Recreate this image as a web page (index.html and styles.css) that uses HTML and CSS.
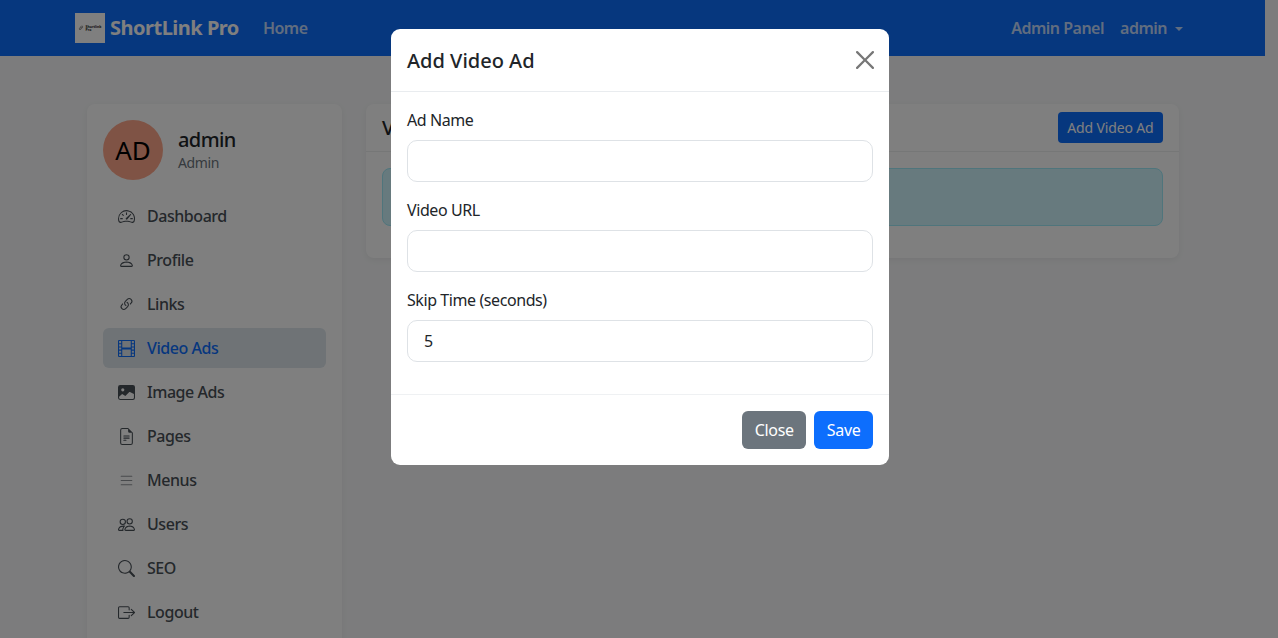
FILE: index.html
```html
<!DOCTYPE html>
<html lang="en">
<head>
    <meta charset="UTF-8">
    <meta name="viewport" content="width=device-width, initial-scale=1.0">
    <title>Video Ads - ShortLink Pro</title>
    <link rel="stylesheet" href="styles.css">
</head>
<body>

<!-- Top navigation -->
<nav class="navbar">
    <a class="brand" href="#">
        <span class="brand-logo">
            <svg class="brand-logo-icon" viewBox="0 0 16 16"><path d="M4.715 6.542 3.343 7.914a3 3 0 1 0 4.243 4.243l1.828-1.829A3 3 0 0 0 8.586 5.5L8 6.086a1 1 0 0 0-.154.199 2 2 0 0 1 .861 3.337L6.88 11.45a2 2 0 1 1-2.83-2.83l.793-.792a4 4 0 0 1-.128-1.287z"/><path d="M6.586 4.672A3 3 0 0 0 7.414 9.5l.775-.776a2 2 0 0 1-.896-3.346L9.12 3.55a2 2 0 1 1 2.83 2.83l-.793.792c.112.42.155.855.128 1.287l1.372-1.372a3 3 0 1 0-4.243-4.243z"/></svg>
            <span class="brand-logo-text">Shortlink<br>Pro</span>
        </span>
        ShortLink Pro
    </a>
    <a class="nav-link nav-home" href="#">Home</a>
    <div class="nav-right">
        <a class="nav-link" href="#">Admin Panel</a>
        <a class="nav-link nav-user" href="#">admin<span class="caret"></span></a>
    </div>
</nav>

<div class="layout">
    <!-- Sidebar -->
    <aside class="sidebar">
        <div class="user-box">
            <div class="avatar">AD</div>
            <div class="user-info">
                <div class="user-name">admin</div>
                <div class="user-role">Admin</div>
            </div>
        </div>
        <ul class="side-menu">
            <li><a href="#">
                <svg class="icon" viewBox="0 0 16 16"><path d="M8 4a.5.5 0 0 1 .5.5V6a.5.5 0 0 1-1 0V4.5A.5.5 0 0 1 8 4M3.732 5.732a.5.5 0 0 1 .707 0l.915.914a.5.5 0 1 1-.708.708l-.914-.915a.5.5 0 0 1 0-.707M2 10a.5.5 0 0 1 .5-.5h1.586a.5.5 0 0 1 0 1H2.5A.5.5 0 0 1 2 10m9.5 0a.5.5 0 0 1 .5-.5h1.5a.5.5 0 0 1 0 1H12a.5.5 0 0 1-.5-.5m.754-4.246a.39.39 0 0 0-.527-.02L7.547 9.31a.91.91 0 1 0 1.302 1.258l3.434-4.297a.39.39 0 0 0-.029-.518z"/><path fill-rule="evenodd" d="M0 10a8 8 0 1 1 15.547 2.661c-.442 1.253-1.845 1.602-2.932 1.25C11.309 13.488 9.475 13 8 13c-1.474 0-3.31.488-4.615.911-1.087.352-2.49.003-2.932-1.25A8 8 0 0 1 0 10m8-7a7 7 0 0 0-6.603 9.329c.203.575.923.876 1.68.63C4.397 12.533 6.358 12 8 12s3.604.532 4.923.96c.757.245 1.477-.056 1.68-.631A7 7 0 0 0 8 3"/></svg>
                Dashboard</a></li>
            <li><a href="#">
                <svg class="icon" viewBox="0 0 16 16"><path d="M8 8a3 3 0 1 0 0-6 3 3 0 0 0 0 6m2-3a2 2 0 1 1-4 0 2 2 0 0 1 4 0m4 8c0 1-1 1-1 1H3s-1 0-1-1 1-4 6-4 6 3 6 4m-1-.004c-.001-.246-.154-.986-.832-1.664C11.516 10.68 10.289 10 8 10s-3.516.68-4.168 1.332c-.678.678-.83 1.418-.832 1.664z"/></svg>
                Profile</a></li>
            <li><a href="#">
                <svg class="icon" viewBox="0 0 16 16"><path d="M4.715 6.542 3.343 7.914a3 3 0 1 0 4.243 4.243l1.828-1.829A3 3 0 0 0 8.586 5.5L8 6.086a1 1 0 0 0-.154.199 2 2 0 0 1 .861 3.337L6.88 11.45a2 2 0 1 1-2.83-2.83l.793-.792a4 4 0 0 1-.128-1.287z"/><path d="M6.586 4.672A3 3 0 0 0 7.414 9.5l.775-.776a2 2 0 0 1-.896-3.346L9.12 3.55a2 2 0 1 1 2.83 2.83l-.793.792c.112.42.155.855.128 1.287l1.372-1.372a3 3 0 1 0-4.243-4.243z"/></svg>
                Links</a></li>
            <li class="active"><a href="#">
                <svg class="icon" viewBox="0 0 16 16"><path d="M0 1a1 1 0 0 1 1-1h14a1 1 0 0 1 1 1v14a1 1 0 0 1-1 1H1a1 1 0 0 1-1-1zm4 0v6h8V1zm8 8H4v6h8zM1 1v2h2V1zm2 3H1v2h2zM1 7v2h2V7zm2 3H1v2h2zm-2 3v2h2v-2zM15 1h-2v2h2zm-2 3v2h2V4zm2 3h-2v2h2zm-2 3v2h2v-2zm2 3h-2v2h2z"/></svg>
                Video Ads</a></li>
            <li><a href="#">
                <svg class="icon" viewBox="0 0 16 16"><path d="M.002 3a2 2 0 0 1 2-2h12a2 2 0 0 1 2 2v10a2 2 0 0 1-2 2h-12a2 2 0 0 1-2-2zm1 9v1a1 1 0 0 0 1 1h12a1 1 0 0 0 1-1V9.5l-3.777-1.947a.5.5 0 0 0-.577.093l-3.71 3.71-2.66-1.772a.5.5 0 0 0-.63.062zm5-6.5a1.5 1.5 0 1 0-3 0 1.5 1.5 0 0 0 3 0"/></svg>
                Image Ads</a></li>
            <li><a href="#">
                <svg class="icon" viewBox="0 0 16 16"><path d="M5.5 7a.5.5 0 0 0 0 1h5a.5.5 0 0 0 0-1zM5 9.5a.5.5 0 0 1 .5-.5h5a.5.5 0 0 1 0 1h-5a.5.5 0 0 1-.5-.5m0 2a.5.5 0 0 1 .5-.5h2a.5.5 0 0 1 0 1h-2a.5.5 0 0 1-.5-.5"/><path d="M9.5 0H4a2 2 0 0 0-2 2v12a2 2 0 0 0 2 2h8a2 2 0 0 0 2-2V4.5zm0 1v2A1.5 1.5 0 0 0 11 4.5h2V14a1 1 0 0 1-1 1H4a1 1 0 0 1-1-1V2a1 1 0 0 1 1-1z"/></svg>
                Pages</a></li>
            <li><a href="#">
                <svg class="icon icon-light" viewBox="0 0 16 16"><path fill-rule="evenodd" d="M2.5 12a.5.5 0 0 1 .5-.5h10a.5.5 0 0 1 0 1H3a.5.5 0 0 1-.5-.5m0-4a.5.5 0 0 1 .5-.5h10a.5.5 0 0 1 0 1H3a.5.5 0 0 1-.5-.5m0-4a.5.5 0 0 1 .5-.5h10a.5.5 0 0 1 0 1H3a.5.5 0 0 1-.5-.5"/></svg>
                Menus</a></li>
            <li><a href="#">
                <svg class="icon" viewBox="0 0 16 16"><path d="M15 14s1 0 1-1-1-4-5-4-5 3-5 4 1 1 1 1zm-7.978-1L7 12.996c.001-.264.167-1.03.76-1.72C8.312 10.629 9.282 10 11 10c1.717 0 2.687.63 3.24 1.276.593.69.758 1.457.76 1.72l-.008.002-.014.002zM11 7a2 2 0 1 0 0-4 2 2 0 0 0 0 4m3-2a3 3 0 1 1-6 0 3 3 0 0 1 6 0M6.936 9.28a6 6 0 0 0-1.23-.247A7 7 0 0 0 5 9c-4 0-5 3-5 4q0 1 1 1h4.216A2.24 2.24 0 0 1 5 13c0-1.01.377-2.042 1.09-2.904.243-.294.526-.569.846-.816M4.92 10A5.5 5.5 0 0 0 4 13H1c0-.26.164-1.03.76-1.724.545-.636 1.492-1.256 3.16-1.275ZM1.5 5.5a3 3 0 1 1 6 0 3 3 0 0 1-6 0m3-2a2 2 0 1 0 0 4 2 2 0 0 0 0-4"/></svg>
                Users</a></li>
            <li><a href="#">
                <svg class="icon" viewBox="0 0 16 16"><path d="M11.742 10.344a6.5 6.5 0 1 0-1.397 1.398h-.001q.044.06.098.115l3.85 3.85a1 1 0 0 0 1.415-1.414l-3.85-3.85a1 1 0 0 0-.115-.1zM12 6.5a5.5 5.5 0 1 1-11 0 5.5 5.5 0 0 1 11 0"/></svg>
                SEO</a></li>
            <li><a href="#">
                <svg class="icon" viewBox="0 0 16 16"><path fill-rule="evenodd" d="M10 12.5a.5.5 0 0 1-.5.5h-8a.5.5 0 0 1-.5-.5v-9a.5.5 0 0 1 .5-.5h8a.5.5 0 0 1 .5.5v2a.5.5 0 0 0 1 0v-2A1.5 1.5 0 0 0 9.5 2h-8A1.5 1.5 0 0 0 0 3.5v9A1.5 1.5 0 0 0 1.5 14h8a1.5 1.5 0 0 0 1.5-1.5v-2a.5.5 0 0 0-1 0z"/><path fill-rule="evenodd" d="M15.854 8.354a.5.5 0 0 0 0-.708l-3-3a.5.5 0 0 0-.708.708L14.293 7.5H5.5a.5.5 0 0 0 0 1h8.793l-2.147 2.146a.5.5 0 0 0 .708.708z"/></svg>
                Logout</a></li>
        </ul>
    </aside>

    <!-- Main card -->
    <main class="card">
        <div class="card-header">
            <h2>Video Ads</h2>
            <button class="btn btn-small" type="button">Add Video Ad</button>
        </div>
        <div class="card-body">
            <div class="alert"></div>
        </div>
    </main>
</div>

<!-- Add Video Ad modal -->
<div class="backdrop">
    <div class="modal">
        <div class="modal-header">
            <h3>Add Video Ad</h3>
            <svg class="modal-close" viewBox="0 0 16 16"><path d="M.293.293a1 1 0 0 1 1.414 0L8 6.586 14.293.293a1 1 0 1 1 1.414 1.414L9.414 8l6.293 6.293a1 1 0 0 1-1.414 1.414L8 9.414l-6.293 6.293a1 1 0 0 1-1.414-1.414L6.586 8 .293 1.707a1 1 0 0 1 0-1.414"/></svg>
        </div>
        <div class="modal-body">
            <div class="field">
                <label for="adName">Ad Name</label>
                <input id="adName" type="text">
            </div>
            <div class="field">
                <label for="videoUrl">Video URL</label>
                <input id="videoUrl" type="text">
            </div>
            <div class="field">
                <label for="skipTime">Skip Time (seconds)</label>
                <input id="skipTime" type="text" value="5">
            </div>
        </div>
        <div class="modal-footer">
            <button class="btn btn-grey" type="button">Close</button>
            <button class="btn btn-blue" type="button">Save</button>
        </div>
    </div>
</div>

</body>
</html>
```

FILE: styles.css
```css
* {
    box-sizing: border-box;
    margin: 0;
    padding: 0;
}

html {
    overflow: hidden;
    height: 100%;
}

body {
    font-family: "Noto Sans", "Open Sans", sans-serif;
    font-size: 16px;
    line-height: 24px;
    color: #212529;
    background-color: #f8f9fa;
    padding-right: 13px;
    height: 100%;
    overflow: hidden;
}

a {
    text-decoration: none;
    color: inherit;
}

/* Navbar */
.navbar {
    display: flex;
    align-items: center;
    height: 56px;
    padding: 0 82px 0 75px;
    background-color: #0d6efd;
    color: #fff;
}

.brand {
    display: flex;
    align-items: center;
    gap: 5px;
    font-size: 20px;
    font-weight: 700;
    letter-spacing: -0.5px;
}

.brand-logo {
    display: flex;
    align-items: center;
    justify-content: center;
    gap: 1px;
    width: 30px;
    height: 30px;
    background-color: #fff;
    color: #222;
}

.brand-logo-icon {
    width: 6px;
    height: 6px;
    fill: currentColor;
}

.brand-logo-text {
    font-size: 3.5px;
    line-height: 3.5px;
    font-weight: 700;
    letter-spacing: 0;
}

.nav-link {
    font-weight: 600;
    letter-spacing: -0.5px;
    color: rgba(255, 255, 255, 0.75);
}

.nav-home {
    margin-left: 24px;
}

.nav-right {
    display: flex;
    gap: 16px;
    margin-left: auto;
}

.caret {
    display: inline-block;
    margin-left: 8px;
    vertical-align: 3px;
    border-top: 4px solid;
    border-left: 4px solid transparent;
    border-right: 4px solid transparent;
}

/* Page layout */
.layout {
    display: flex;
    align-items: flex-start;
    gap: 24px;
    padding: 48px 0 0 87px;
}

.sidebar {
    flex: none;
    width: 255px;
    padding: 16px;
    background-color: #fff;
    border-radius: 8px;
    box-shadow: 0 2px 6px rgba(0, 0, 0, 0.06);
}

.user-box {
    display: flex;
    align-items: center;
    gap: 15px;
    margin-bottom: 16px;
}

.user-info {
    padding-bottom: 2px;
}

.avatar {
    display: flex;
    align-items: center;
    justify-content: center;
    width: 60px;
    height: 60px;
    border-radius: 50%;
    background-color: #ffa78a;
    color: #000;
    font-size: 26px;
}

.user-name {
    font-size: 20px;
    font-weight: 500;
    line-height: 28px;
    letter-spacing: -0.6px;
}

.user-role {
    font-size: 14px;
    line-height: 18px;
    letter-spacing: -0.4px;
    color: #6c757d;
}

.side-menu {
    list-style: none;
}

.side-menu li {
    margin-bottom: 4px;
    border-radius: 6px;
}

.side-menu a {
    display: flex;
    align-items: center;
    height: 40px;
    padding: 0 15px;
    gap: 12px;
    font-weight: 500;
    letter-spacing: -0.45px;
    color: #495057;
}

.side-menu .active {
    background-color: #dee6ec;
}

.side-menu .active a {
    color: #0d6efd;
}

.icon {
    flex: none;
    width: 17px;
    height: 17px;
    fill: currentColor;
}

.icon-light {
    opacity: 0.6;
}

/* Main card */
.card {
    flex: none;
    width: 813px;
    background-color: #fff;
    border-radius: 8px;
    box-shadow: 0 2px 6px rgba(0, 0, 0, 0.06);
}

.card-header {
    display: flex;
    align-items: center;
    justify-content: space-between;
    height: 48px;
    padding: 0 16px;
    border-bottom: 1px solid #eceeef;
}

.card-header h2 {
    font-size: 20px;
    font-weight: 500;
}

.card-body {
    padding: 16px;
}

.alert {
    height: 58px;
    margin-bottom: 16px;
    background-color: #cff4fc;
    border: 1px solid #9eeaf9;
    border-radius: 8px;
}

/* Buttons */
.btn {
    font-family: inherit;
    font-size: 16px;
    height: 38px;
    padding: 0 12.5px;
    border: none;
    border-radius: 6px;
    letter-spacing: -0.3px;
    color: #fff;
}

.btn-small {
    font-size: 14px;
    height: 31px;
    padding: 0 9.5px;
    border-radius: 4px;
    letter-spacing: -0.15px;
    background-color: #0d6efd;
}

.btn-grey {
    background-color: #6c757d;
}

.btn-blue {
    background-color: #0d6efd;
}

/* Modal */
.backdrop {
    position: fixed;
    top: 0;
    right: 0;
    bottom: 0;
    left: 0;
    background-color: rgba(0, 0, 0, 0.5);
    padding: 29px 389px 0 391px;
}

.modal {
    width: 498px;
    background-color: #fff;
    border-radius: 9px;
}

.modal-header {
    display: flex;
    align-items: center;
    justify-content: space-between;
    height: 63px;
    padding: 2px 16px 0;
    border-bottom: 1px solid #e9ecef;
}

.modal-header h3 {
    font-size: 20px;
    font-weight: 500;
}

.modal-close {
    width: 18px;
    height: 18px;
    margin-right: -1px;
    margin-top: -2px;
    fill: #777;
}

.modal-body {
    padding: 16px 16px 32px;
}

.field {
    display: flex;
    flex-direction: column;
    gap: 8px;
    margin-bottom: 16px;
}

.field:last-child {
    margin-bottom: 0;
}

.field label {
    line-height: 24px;
    letter-spacing: -0.42px;
}

.field input {
    height: 42px;
    padding: 0 16px;
    font-family: inherit;
    font-size: 16px;
    color: #212529;
    border: 1px solid #dee2e6;
    border-radius: 10px;
    outline: none;
}

.modal-footer {
    display: flex;
    justify-content: flex-end;
    gap: 8px;
    padding: 16px;
    border-top: 1px solid #eff1f3;
}
```
